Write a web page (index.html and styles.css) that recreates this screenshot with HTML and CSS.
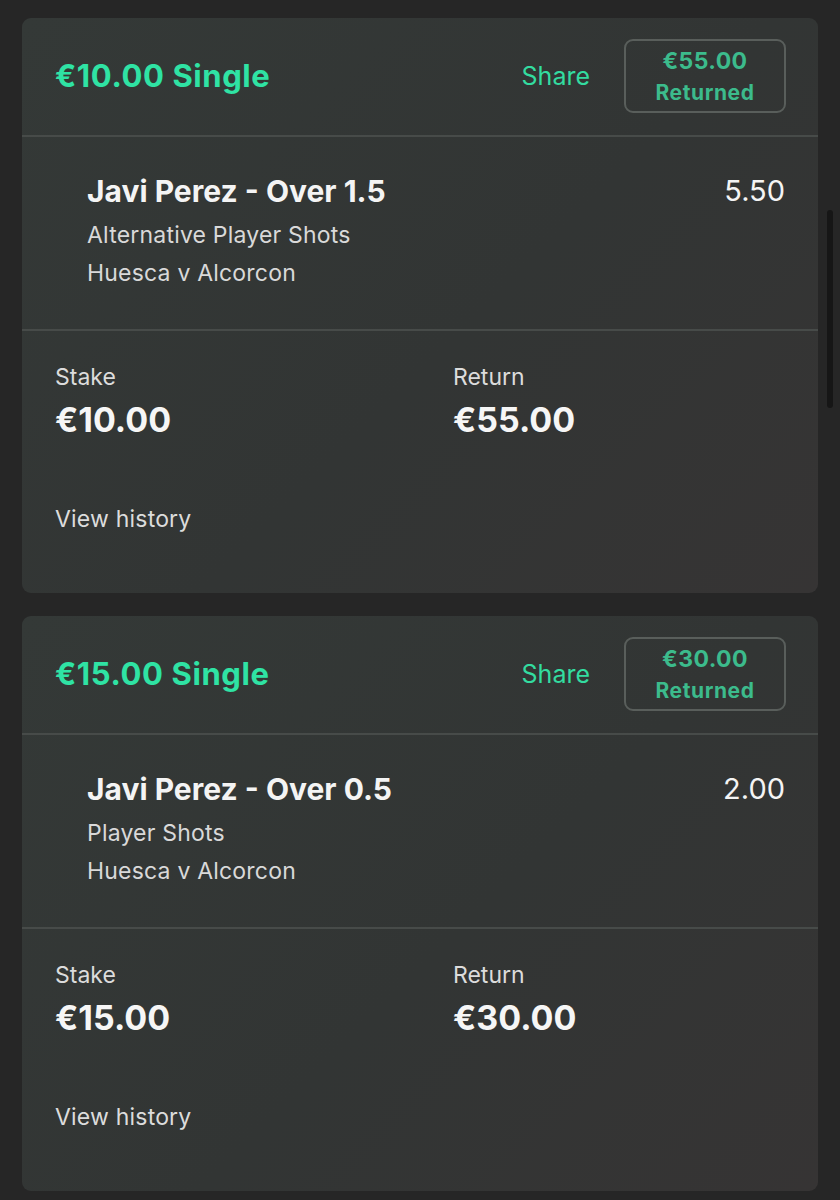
FILE: index.html
```html
<!DOCTYPE html>
<html lang="en">
<head>
    <meta charset="UTF-8">
    <title>My Bets - Settled</title>
    <link rel="stylesheet" href="styles.css">
</head>
<body>
<div class="scrollbar"></div>
<div class="betlist">
    <div class="betcard">
        <div class="bethead">
            <div class="bettitle">€10.00 Single</div>
            <div class="share">Share</div>
            <div class="badge">
                <span class="badge-amt">€55.00</span>
                <span class="badge-lbl">Returned</span>
            </div>
        </div>
        <div class="selection">
            <div class="selinfo">
                <div class="selname">Javi Perez - Over 1.5</div>
                <div class="selsub">Alternative Player Shots</div>
                <div class="selsub">Huesca v Alcorcon</div>
            </div>
            <div class="odds">5.50</div>
        </div>
        <div class="betfoot">
            <div class="sums">
                <div>
                    <div class="label">Stake</div>
                    <div class="amount">€10.00</div>
                </div>
                <div>
                    <div class="label">Return</div>
                    <div class="amount">€55.00</div>
                </div>
            </div>
            <div class="history">View history</div>
        </div>
    </div>

    <div class="betcard">
        <div class="bethead">
            <div class="bettitle">€15.00 Single</div>
            <div class="share">Share</div>
            <div class="badge">
                <span class="badge-amt">€30.00</span>
                <span class="badge-lbl">Returned</span>
            </div>
        </div>
        <div class="selection">
            <div class="selinfo">
                <div class="selname">Javi Perez - Over 0.5</div>
                <div class="selsub">Player Shots</div>
                <div class="selsub">Huesca v Alcorcon</div>
            </div>
            <div class="odds">2.00</div>
        </div>
        <div class="betfoot">
            <div class="sums">
                <div>
                    <div class="label">Stake</div>
                    <div class="amount">€15.00</div>
                </div>
                <div>
                    <div class="label">Return</div>
                    <div class="amount">€30.00</div>
                </div>
            </div>
            <div class="history">View history</div>
        </div>
    </div>
</div>
</body>
</html>
```
FILE: styles.css
```css
*{
    margin: 0;
    padding: 0;
    box-sizing: border-box;
}
body{
    background: #262626;
    font-family: Inter, "Liberation Sans", sans-serif;
    color: #ececec;
    height: 1200px;
    overflow: hidden;
}
.betlist{
    padding: 18px 22px 0;
    display: flex;
    flex-direction: column;
    gap: 23px;
}
.betcard{
    width: 796px;
    border-radius: 9px;
    background: linear-gradient(135deg, #343937 0%, #323534 55%, #363434 100%);
    overflow: hidden;
}
/* header: title, share link, returned badge */
.bethead{
    height: 119px;
    display: flex;
    align-items: center;
    padding: 0 32px 2px 33px;
    border-bottom: 2px solid #474b49;
}
.bettitle{
    flex: 1;
    font-size: 31px;
    font-weight: 700;
    color: #2fe3a4;
    letter-spacing: 0.6px;
}
.share{
    font-size: 25px;
    color: #33dca0;
    margin-right: 34px;
}
.badge{
    width: 162px;
    height: 74px;
    border: 2px solid #595e5b;
    border-radius: 9px;
    display: flex;
    flex-direction: column;
    align-items: center;
    justify-content: center;
    color: #3cbb8c;
    font-weight: 700;
    line-height: 31px;
    padding-top: 2px;
}
.badge-amt{
    font-size: 23px;
    letter-spacing: 0.4px;
}
.badge-lbl{
    font-size: 21px;
    letter-spacing: 0.6px;
}
/* selection row */
.selection{
    height: 194px;
    display: flex;
    padding: 36px 33px 0 65px;
    border-bottom: 2px solid #474b49;
}
.selinfo{
    flex: 1;
}
.selname{
    font-size: 30px;
    font-weight: 700;
    line-height: 36px;
    color: #f4f4f4;
    margin-bottom: 7px;
}
.selsub{
    font-size: 23px;
    line-height: 38px;
    color: #d9d9d9;
    letter-spacing: 0.2px;
}
.odds{
    font-size: 29px;
    line-height: 36px;
    color: #f4f4f4;
}
/* stake / return */
.betfoot{
    height: 262px;
    padding: 31px 33px 0;
}
.sums{
    display: grid;
    grid-template-columns: 398px 1fr;
}
.label{
    font-size: 23px;
    line-height: 30px;
    color: #dcdcdc;
}
.amount{
    font-size: 34px;
    font-weight: 700;
    line-height: 44px;
    color: #f6f6f6;
    margin-top: 6px;
}
.history{
    margin-top: 62px;
    font-size: 23px;
    line-height: 30px;
    color: #dcdcdc;
    letter-spacing: 0.2px;
}
.scrollbar{
    position: absolute;
    left: 827px;
    top: 210px;
    width: 6px;
    height: 198px;
    border-radius: 3px;
    background: #161616;
}
```
